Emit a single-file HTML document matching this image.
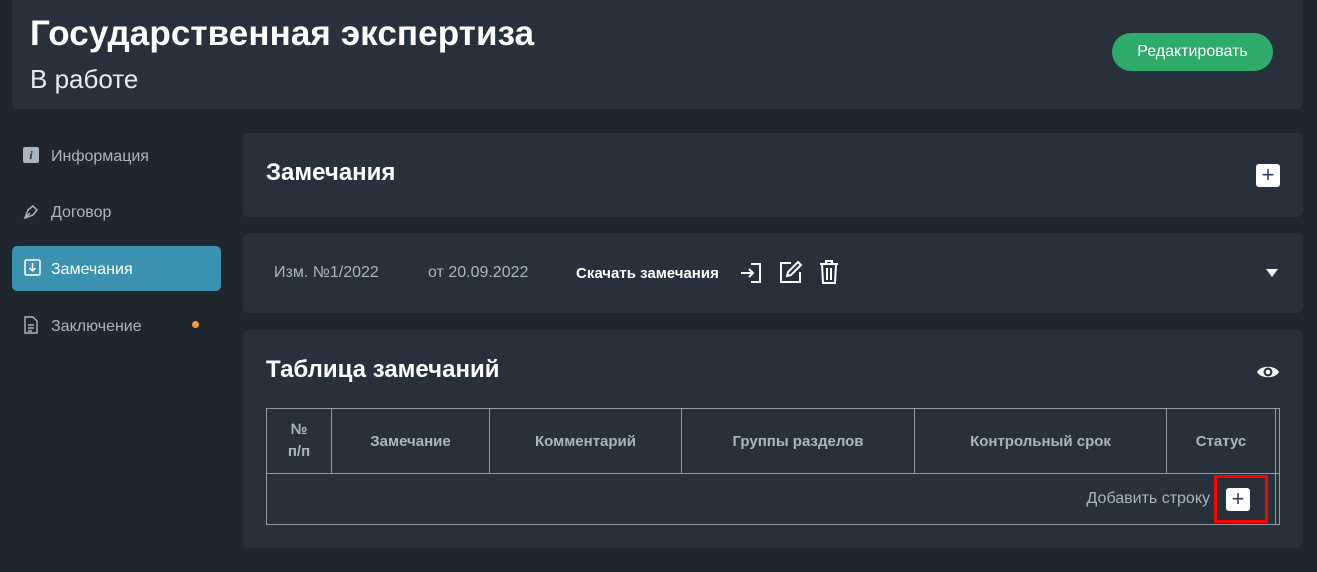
<!DOCTYPE html>
<html><head><meta charset="utf-8"><style>
*{box-sizing:border-box;margin:0;padding:0}
body{width:1317px;height:572px;background:#1f262d;font-family:"Liberation Sans",sans-serif;color:#fff;position:relative;overflow:hidden}
.card{position:absolute;background:#28313b;border-radius:6px}
.abs{position:absolute}
.nav{position:absolute;left:51px;font-size:16px;color:#a9b6c2}
th,td{border:1px solid #8e9ba6}
</style></head><body>
<div class="card" style="left:12px;top:0;width:1291px;height:109px;border-radius:0 0 6px 6px">
 <div class="abs" style="left:18px;top:14px;font-size:35px;font-weight:bold;letter-spacing:0.1px">Государственная экспертиза</div>
 <div class="abs" style="left:18px;top:64px;font-size:26px;color:#e8ecef">В работе</div>
 <div class="abs" style="left:1100px;top:33px;width:161px;height:38px;background:#2eaa6a;border-radius:19px;font-size:16px;text-align:center;line-height:38px">Редактировать</div>
</div>
<div class="abs" style="left:23px;top:147px;width:16px;height:16px;background:#a9b6c2;border-radius:2px;color:#28313b;font:italic bold 12px 'Liberation Serif',serif;text-align:center;line-height:16px">i</div>
<div class="nav" style="top:148px">Информация</div>
<svg class="abs" style="left:23px;top:203px" width="17" height="17" viewBox="0 0 17 17" fill="none" stroke="#a9b6c2" stroke-width="1.5"><path d="M2 15l3-8 5-4 4 4-4 5z M2 15l5-5"/></svg>
<div class="nav" style="top:204px">Договор</div>
<div class="abs" style="left:12px;top:246px;width:209px;height:45px;background:#3b92b0;border-radius:5px"></div>
<svg class="abs" style="left:24px;top:259px" width="17" height="17" viewBox="0 0 17 17" fill="none" stroke="#fff" stroke-width="1.5"><rect x="1" y="1" width="15" height="15" rx="1.5"/><path d="M8.5 4v8M5.5 9l3 3 3-3"/></svg>
<div class="nav" style="top:261px;color:#fff">Замечания</div>
<svg class="abs" style="left:24px;top:316px" width="14" height="18" viewBox="0 0 14 18" fill="none" stroke="#a9b6c2" stroke-width="1.4"><path d="M1 1h8l4 4v12H1z M4 9h6M4 12h6M4 15h4"/></svg>
<div class="nav" style="top:318px">Заключение</div>
<div class="abs" style="left:192px;top:321px;width:7px;height:7px;border-radius:50%;background:#f0a030"></div>

<div class="card" style="left:243px;top:133px;width:1060px;height:84px">
 <div class="abs" style="left:23px;top:26px;font-size:24px;font-weight:bold">Замечания</div>
 <div class="abs" style="left:1013px;top:31px;width:24px;height:23px;background:#fff;border-radius:3px;color:#333a63;font-size:22px;text-align:center;line-height:22px">+</div>
</div>
<div class="card" style="left:243px;top:233px;width:1060px;height:80px">
 <div class="abs" style="left:31px;top:31px;font-size:16px;color:#a9b6c2">Изм. №1/2022</div>
 <div class="abs" style="left:185px;top:31px;font-size:16px;color:#a9b6c2">от 20.09.2022</div>
 <div class="abs" style="left:333px;top:32px;font-size:15px;font-weight:bold">Скачать замечания</div>
 <svg class="abs" style="left:496px;top:28px" width="24" height="24" viewBox="0 0 24 24" fill="none" stroke="#fff" stroke-width="2"><path d="M2 12h12M10 8l4 4-4 4M12 3h9v18h-9"/></svg>
 <svg class="abs" style="left:536px;top:27px" width="24" height="24" viewBox="0 0 24 24" fill="none" stroke="#fff" stroke-width="2"><path d="M12 3H2v19h19V12"/><path d="M8 16l1-4 10-10 3 3-10 10z"/></svg>
 <svg class="abs" style="left:576px;top:27px" width="20" height="24" viewBox="0 0 20 24" fill="none" stroke="#fff" stroke-width="2"><path d="M1 4h18M7 4V1h6v3M3 4l1 19h12l1-19M8 8v12M12 8v12"/></svg>
 <div class="abs" style="left:1023px;top:36px;width:0;height:0;border-left:6px solid transparent;border-right:6px solid transparent;border-top:8px solid #fff"></div>
</div>
<div class="card" style="left:243px;top:330px;width:1060px;height:218px">
 <div class="abs" style="left:23px;top:26px;font-size:24px;font-weight:bold">Таблица замечаний</div>
 <svg class="abs" style="left:1013px;top:33px" width="24" height="18" viewBox="0 0 24 18"><path d="M1 9C5 2 19 2 23 9 19 16 5 16 1 9z" fill="#fff"/><circle cx="12" cy="9" r="4.5" fill="#28313b"/><circle cx="12" cy="9" r="2.3" fill="#fff"/></svg>
</div>
<table class="abs" style="left:266px;top:408px;width:1014px;border-collapse:collapse;font-size:15px;font-weight:bold;color:#a9b6c2;text-align:center">
<tr style="height:65px"><th style="width:65px;line-height:22px">№<br>п/п</th><th style="width:158px">Замечание</th><th style="width:192px">Комментарий</th><th style="width:233px">Группы разделов</th><th style="width:252px">Контрольный срок</th><th style="width:109px">Статус</th><th></th></tr>
<tr style="height:51px"><td colspan="6" style="text-align:right;font-weight:normal;font-size:16px;padding-right:10px;position:relative">Добавить строку<span style="display:inline-block;width:55px"></span>
 <div class="abs" style="right:7px;top:1px;width:54px;height:48px;border:3px solid #ff0000"></div>
 <div class="abs" style="right:25px;top:14px;width:24px;height:23px;background:#fff;border-radius:3px;color:#333a63;font-size:22px;line-height:22px;text-align:center">+</div></td><td></td></tr>
</table>
</body></html>
